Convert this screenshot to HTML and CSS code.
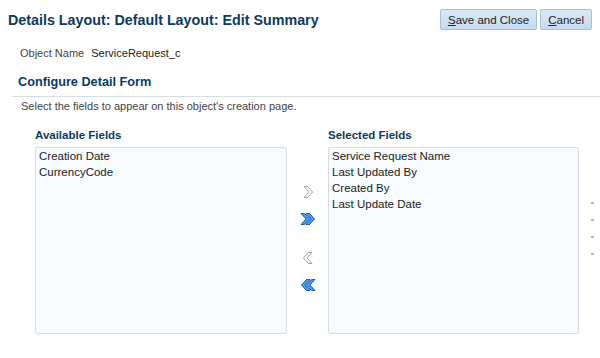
FILE: index.html
```html
<!DOCTYPE html>
<html lang="en">
<head>
  <meta charset="UTF-8" />
  <title>Details Layout: Edit Summary</title>
  <link rel="stylesheet" href="styles.css">
</head>
<body>
<div class="page-head">
  <h1 class="page-title">Details Layout: Default Layout: Edit Summary</h1>
  <div class="actions">
    <button class="btn"><u>S</u>ave and Close</button>
    <button class="btn"><u>C</u>ancel</button>
  </div>
</div>

<div class="obj-row">
  <span class="obj-label">Object Name</span>
  <span class="obj-value">ServiceRequest_c</span>
</div>

<div class="section">
  <h2 class="section-title">Configure Detail Form</h2>
  <p class="hint">Select the fields to appear on this object's creation page.</p>

  <div class="shuttle">
    <div class="list-col">
      <div class="list-label">Available Fields</div>
      <ul class="list-box">
        <li>Creation Date</li>
        <li>CurrencyCode</li>
      </ul>
    </div>

    <div class="moves">
      <!-- move -->
      <svg class="ico" width="12" height="14" viewBox="0 0 12 14">
        <polygon points="2,1.5 5.5,1.5 10.5,7 5.5,12.5 2,12.5 7,7" fill="#fff" stroke="#9a9a9a" />
      </svg>
      <!-- move all -->
      <svg class="ico" width="16" height="14" viewBox="0 0 16 14">
        <polygon points="1,1.5 4.5,1.5 9.5,7 4.5,12.5 1,12.5 6,7" fill="#4b9de9" stroke="#1a5fb6" />
        <polygon points="6,1.5 9.5,1.5 14.5,7 9.5,12.5 6,12.5 11,7" fill="#4b9de9" stroke="#1a5fb6" />
      </svg>
      <!-- remove -->
      <svg class="ico gap" width="12" height="14" viewBox="0 0 12 14">
        <polygon points="10,1.5 6.5,1.5 1.5,7 6.5,12.5 10,12.5 5,7" fill="#fff" stroke="#9a9a9a" />
      </svg>
      <!-- remove all -->
      <svg class="ico" width="16" height="14" viewBox="0 0 16 14">
        <polygon points="15,1.5 11.5,1.5 6.5,7 11.5,12.5 15,12.5 10,7" fill="#4b9de9" stroke="#1a5fb6" />
        <polygon points="10,1.5 6.5,1.5 1.5,7 6.5,12.5 10,12.5 5,7" fill="#4b9de9" stroke="#1a5fb6" />
      </svg>
    </div>

    <div class="list-col">
      <div class="list-label">Selected Fields</div>
      <ul class="list-box">
        <li>Service Request Name</li>
        <li>Last Updated By</li>
        <li>Created By</li>
        <li>Last Update Date</li>
      </ul>
    </div>

    <div class="reorder">
      <span class="tick"></span>
      <span class="tick"></span>
      <span class="tick"></span>
      <span class="tick"></span>
    </div>
  </div>
</div>
</body>
</html>
```

FILE: styles.css
```css
body {
  margin: 0;
  padding: 0;
  background: white;
  font-family: "Liberation Sans", Arial, sans-serif;
  font-size: 11px;
  color: #333;
  overflow: hidden;
}
.page-head {
  display: flex;
  justify-content: space-between;
  align-items: center;
  padding: 9px 8px 0 8px;
  height: 21px;
}
.page-title {
  margin: 0;
  font-size: 14.3px;
  font-weight: bold;
  color: #0b3b5f;
}
.actions {
  display: flex;
  gap: 3px;
}
.btn {
  height: 21px;
  padding: 0 7px;
  font-family: "Liberation Sans", Arial, sans-serif;
  font-size: 11.5px;
  color: #222;
  background: linear-gradient(#dbe8f6, #c7daef);
  border: 1px solid #a6bfdc;
  border-radius: 2px;
}
.obj-row {
  display: flex;
  gap: 7px;
  padding: 16px 0 0 20px;
  height: 14px;
  line-height: 14px;
  color: #222;
}
.obj-label {
  color: #444;
}
.section {
  padding-top: 15px;
}
.section-title {
  margin: 0 0 0 12px;
  padding: 0 0 7px 6px;
  font-size: 12.7px;
  font-weight: bold;
  color: #0b3b5f;
  border-bottom: 1px solid #d5dde5;
}
.hint {
  margin: 2px 0 0 21px;
  line-height: 14px;
  color: #444;
}
.shuttle {
  display: grid;
  grid-template-columns: 252px 41px 251px 1fr;
  padding: 15px 0 0 35px;
}
.list-label {
  font-weight: bold;
  color: #0b3b5f;
  font-size: 11.5px;
  height: 14px;
  line-height: 14px;
  margin-bottom: 5px;
}
.list-box {
  list-style: none;
  margin: 0;
  padding: 0 3px;
  height: 185px;
  background: #f7fbfe;
  border: 1px solid #d6dde4;
  border-radius: 2px;
  color: #222;
  font-size: 11.5px;
}
.list-box li {
  height: 16px;
  line-height: 16px;
}
.moves {
  display: flex;
  flex-direction: column;
  align-items: center;
  padding-top: 57px;
  gap: 13px;
}
.ico.gap {
  margin-top: 12px;
}
.reorder {
  display: flex;
  flex-direction: column;
  align-items: flex-end;
  gap: 15px;
  padding: 74px 6px 0 0;
}
.tick {
  width: 3px;
  height: 2px;
  background: #b8b8b8;
}
```
